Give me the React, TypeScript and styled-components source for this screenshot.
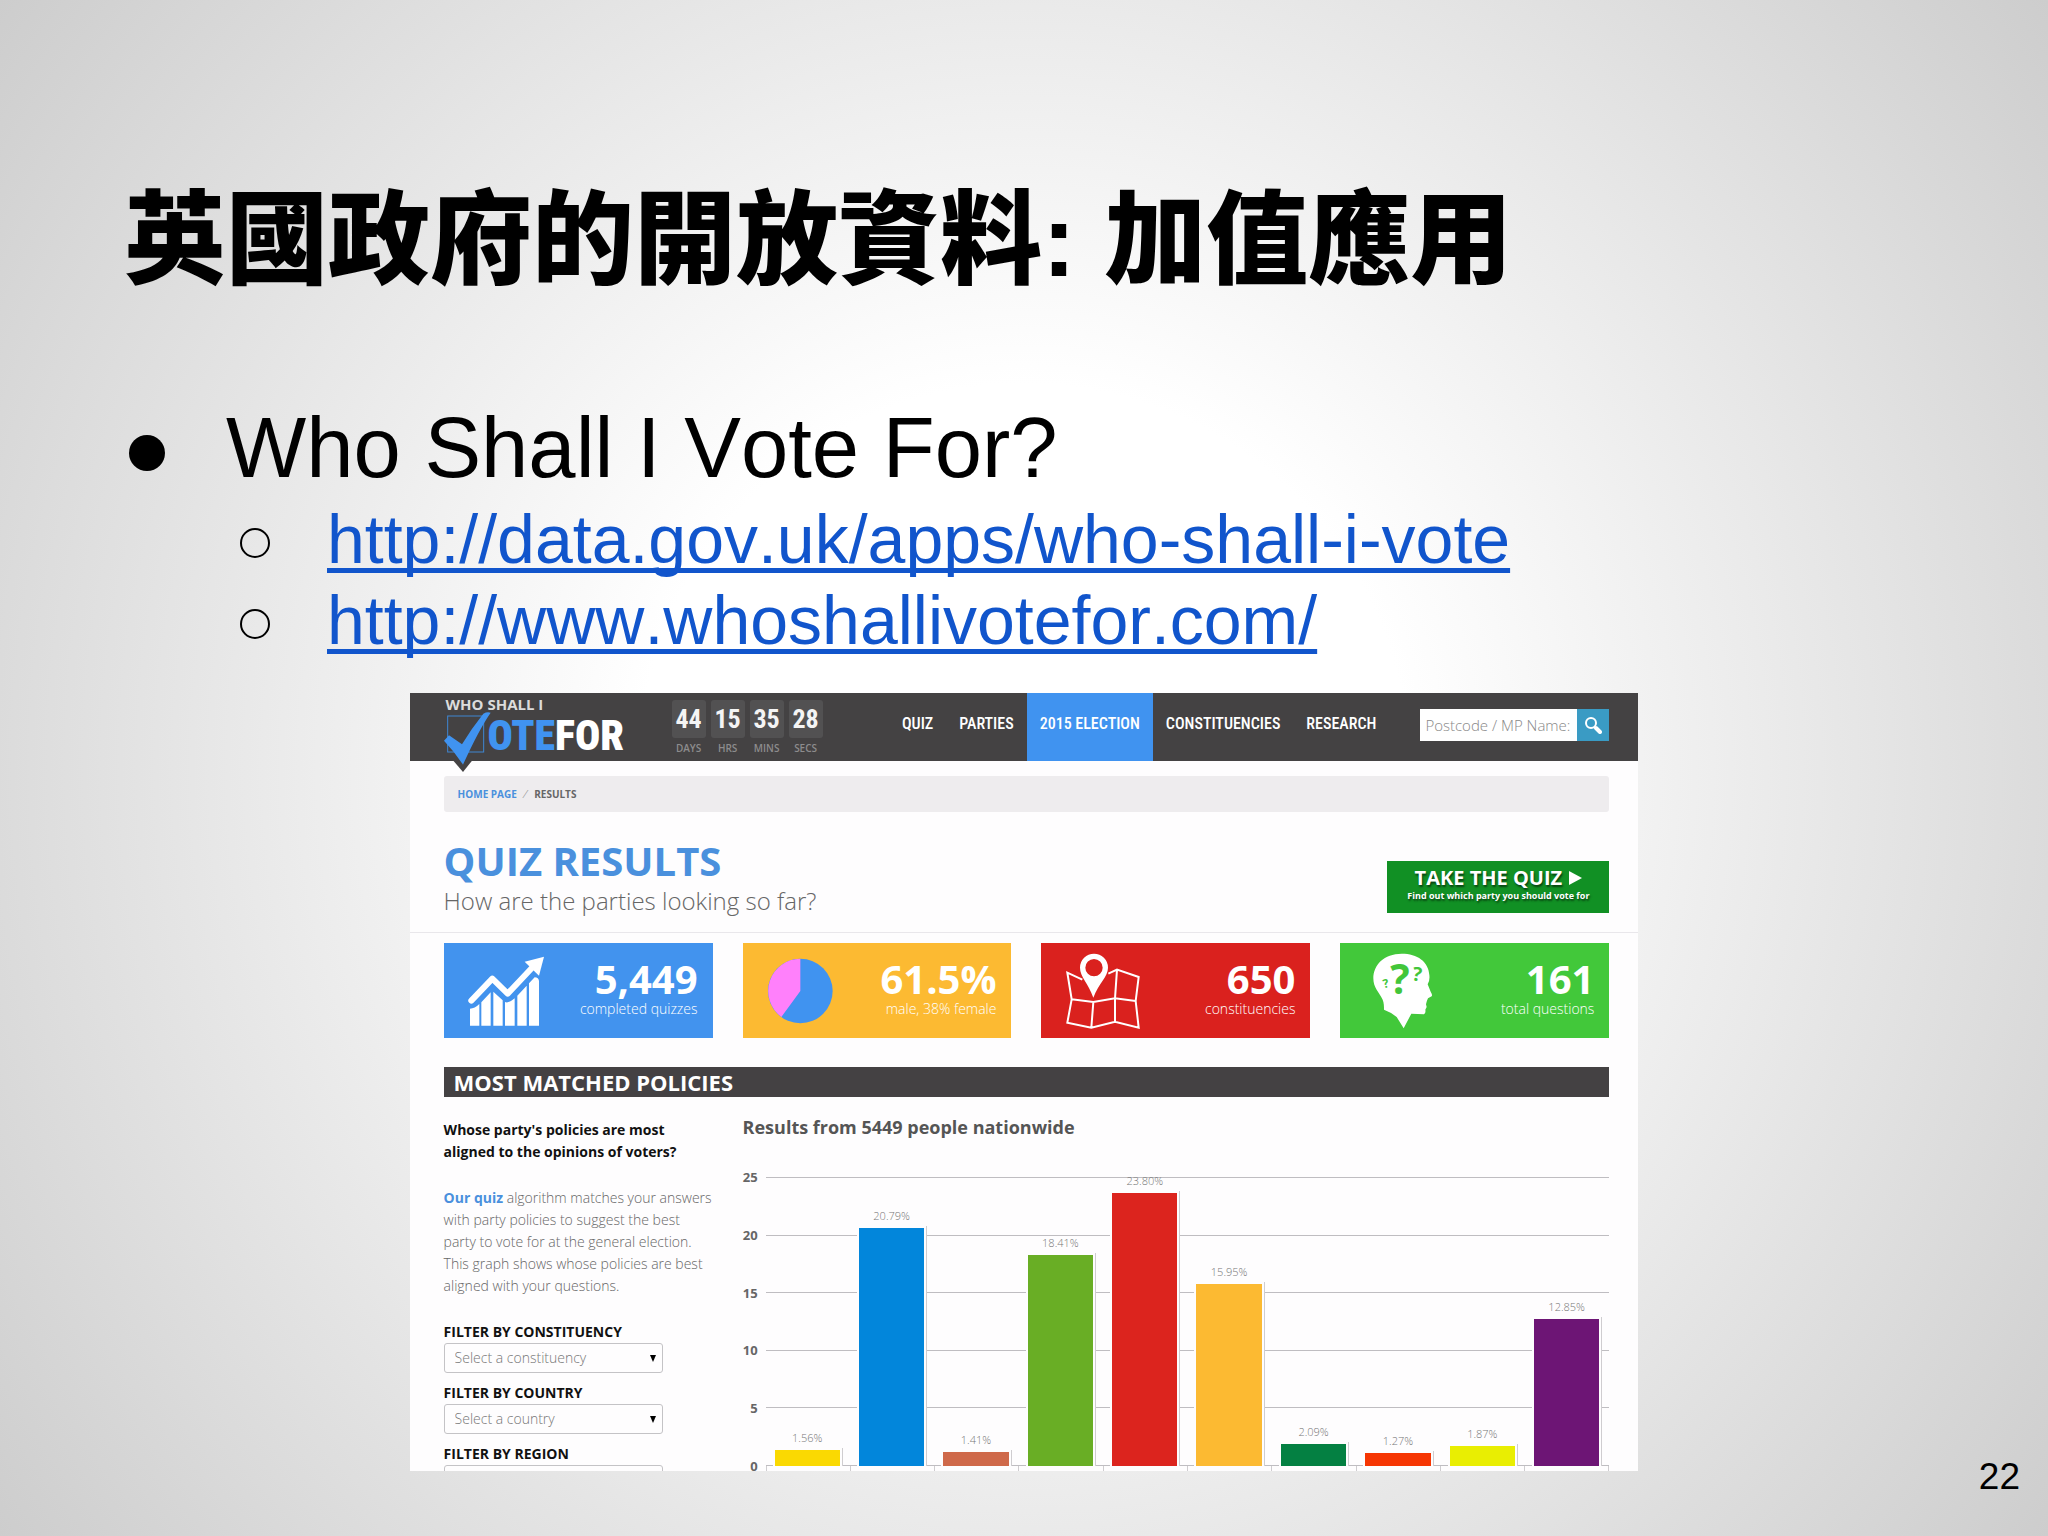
import React from 'react';
import styled, { createGlobalStyle } from 'styled-components';

const ARIAL = '"Liberation Sans", "Noto Sans CJK TC", sans-serif';
const OPEN = '"Open Sans", sans-serif';
const NARROW = '"Roboto Condensed", "Roboto", sans-serif';

const GlobalStyle = createGlobalStyle`
  *, *::before, *::after { box-sizing: border-box; }
  body { margin: 0; font-family: ${ARIAL}; color: #000; }
  h1, h2, h3, h4, p, ul { margin: 0; padding: 0; }
  ul { list-style: none; }
  button, input, select { font: inherit; border: 0; margin: 0; }
`;

/* ---------- slide ---------- */

const Slide = styled.main`
  display: flex;
  flex-direction: column;
  min-height: 100vh;
  overflow: hidden;
  background: radial-gradient(circle farthest-corner at 50% 50%, #fff 0%, #fff 30%, #cdcdcd 100%);
`;

const SlideTitle = styled.h1`
  padding: 181px 124px 0;
  font-size: 102px;
  font-weight: 900;
  line-height: 120px;
`;

const Points = styled.ul`
  padding: 98px 124px 0;
  font-kerning: none;
`;

const Point = styled.div`
  display: flex;
  font-size: 85px;
  line-height: 98px;

  &::before {
    content: '';
    flex: none;
    width: 36px;
    height: 36px;
    margin: 36px 61px 0 5px;
    border-radius: 50%;
    background: #000;
  }
`;

const SubPoints = styled.ul`
  padding: 2px 0 0 116px;
`;

const SubPoint = styled.li`
  display: flex;
  font-size: 68px;
  line-height: 81px;

  &::before {
    content: '';
    flex: none;
    width: 30px;
    height: 30px;
    margin: 29px 57px 0 0;
    border: 2px solid #000;
    border-radius: 50%;
  }
`;

const SlideLink = styled.a`
  color: #1155cc;
  text-decoration: underline;
  text-decoration-thickness: 5px;
  text-underline-offset: 5px;
  text-decoration-skip-ink: none;
`;

const Stage = styled.div`
  display: grid;
  grid-template-columns: 20% 60% 20%;
  flex: 1;
  margin-top: 32px;
`;

const PageNumber = styled.footer`
  grid-column: 3;
  align-self: end;
  padding: 0 28px 38px;
  font-size: 37px;
  line-height: 42px;
  text-align: right;
`;

/* ---------- embedded site ---------- */

const Site = styled.section`
  grid-column: 2;
  align-self: start;
  aspect-ratio: 1229 / 778;
  overflow: hidden;
  background: #fefdfe;
  font-family: ${OPEN};
`;

const SiteHeader = styled.header`
  position: relative;
  z-index: 1;
  display: flex;
  align-items: flex-start;
  height: 68px;
  padding: 0 29px 0 34px;
  background: #444243;
`;

const Logo = styled.a`
  flex: none;
  width: 228px;
  padding-top: 4px;
  text-decoration: none;
`;

const LogoTop = styled.span`
  display: block;
  padding-left: 2px;
  color: #dcdcdc;
  font-size: 15px;
  font-weight: 700;
  line-height: 15px;
`;

const LogoWord = styled.span`
  display: flex;
  align-items: flex-start;
  gap: 1px;
  color: #fff;
  font-family: ${NARROW};
  font-size: 42px;
  font-weight: 900;
  line-height: 48px;

  svg { flex: none; overflow: visible; }
  em { color: #4093f0; font-style: normal; }
`;

const Countdown = styled.div`
  display: flex;
  gap: 5px;
  padding-top: 7px;
`;

const Unit = styled.div`
  width: 34px;
  text-align: center;
`;

const UnitValue = styled.div`
  border-radius: 3px;
  background: #525152;
  color: #f4f4f4;
  font-family: ${NARROW};
  font-size: 26px;
  font-weight: 700;
  line-height: 38px;
`;

const UnitName = styled.div`
  padding-top: 3px;
  color: #8d8c8d;
  font-size: 10px;
  font-weight: 600;
  line-height: 14px;
`;

const Nav = styled.nav`
  display: flex;
  margin-left: auto;
`;

const NavLink = styled.a<{ $active?: boolean }>`
  padding: 0 13px 6px;
  background: ${(p) => (p.$active ? '#4093f0' : 'transparent')};
  color: #fff;
  font-family: ${NARROW};
  font-size: 16px;
  font-weight: 500;
  line-height: 62px;
  text-decoration: none;
  white-space: nowrap;
`;

const Search = styled.form`
  display: flex;
  width: 189px;
  height: 32px;
  margin: 16px 0 0 31px;
`;

const SearchInput = styled.input`
  flex: 1;
  min-width: 0;
  padding: 0 5px;
  border-radius: 0;
  background: #fff;
  font-size: 15px;
  font-weight: 300;

  &::placeholder { color: #888; opacity: 1; }
`;

const SearchButton = styled.button`
  display: grid;
  place-items: center;
  width: 32px;
  padding: 0;
  background: #3a9bc4;
`;

const SiteBody = styled.div`
  padding: 15px 29px 0 34px;
`;

const Crumbs = styled.nav`
  display: flex;
  gap: 8px;
  padding: 0 14px;
  border-radius: 3px;
  background: #eeecee;
  color: #666;
  font-size: 10px;
  font-weight: 700;
  line-height: 36px;

  a { color: #4a90dd; text-decoration: none; }
  i { color: #777; font-weight: 300; }
`;

const Intro = styled.div`
  display: flex;
  align-items: flex-start;
  justify-content: space-between;
  margin: 0 -29px 0 -34px;
  padding: 25px 29px 15px 34px;
  border-bottom: 1px solid #e9e7eb;
`;

const IntroTitle = styled.h2`
  color: #4a90dd;
  font-size: 40px;
  font-weight: 700;
  line-height: 48px;
`;

const IntroText = styled.p`
  color: #666;
  font-size: 24px;
  font-weight: 300;
  line-height: 32px;
`;

const QuizButton = styled.button`
  width: 222px;
  height: 52px;
  margin-top: 24px;
  padding: 0 0 6px;
  background: #119024;
  color: #fff;
  font-family: ${OPEN};
  font-weight: 700;
  text-shadow: 1px 2px 2px rgba(0, 0, 0, 0.55);
`;

const QuizButtonTitle = styled.span`
  display: flex;
  align-items: center;
  justify-content: center;
  gap: 6px;
  font-size: 20px;
  line-height: 24px;
`;

const QuizButtonNote = styled.span`
  display: block;
  font-size: 9px;
  line-height: 12px;
`;

const Cards = styled.div`
  display: grid;
  grid-template-columns: repeat(4, 1fr);
  gap: 30px;
  margin-top: 10px;
`;

const Card = styled.article<{ $color: string }>`
  display: flex;
  align-items: center;
  justify-content: space-between;
  height: 95px;
  padding: 0 15px 0 24px;
  background: ${(p) => p.$color};
  color: #fff;
  text-align: right;
`;

const CardBody = styled.div`
  padding-bottom: 6px;
`;

const CardValue = styled.div`
  font-size: 40px;
  font-weight: 700;
  line-height: 42px;
`;

const CardText = styled.div`
  font-size: 14px;
  font-weight: 300;
  line-height: 18px;
`;

const SectionBar = styled.h3`
  margin-top: 29px;
  padding: 0 10px;
  background: #444143;
  color: #fff;
  font-size: 22px;
  font-weight: 700;
  line-height: 30px;
`;

const Columns = styled.div`
  display: grid;
  grid-template-columns: 269px 1fr;
  gap: 30px;
`;

const Side = styled.div`
  display: flex;
  flex-direction: column;
  gap: 24px;
  padding-top: 22px;
  color: #666;
  font-size: 14px;
  font-weight: 300;
  line-height: 22px;
`;

const Question = styled.p`
  width: 240px;
  color: #111;
  font-weight: 700;
`;

const Strong = styled.a`
  color: #4a90dd;
  font-weight: 700;
  text-decoration: none;
`;

const Filters = styled.form`
  display: flex;
  flex-direction: column;
  gap: 9px;
`;

const Field = styled.div`
  display: grid;
  width: 219px;
`;

const FieldLabel = styled.label`
  color: #111;
  font-weight: 700;
`;

const FieldSelect = styled.select`
  grid-area: 2 / 1;
  height: 30px;
  padding: 0 10px;
  border: 1px solid #c4c3c6;
  border-radius: 3px;
  background: #fefdfe;
  color: #777;
  appearance: none;
`;

const FieldArrow = styled.svg`
  grid-area: 2 / 1;
  align-self: center;
  justify-self: end;
  margin-right: 7px;
  pointer-events: none;
`;

const Chart = styled.figure`
  margin: 0;
  padding-top: 18px;
`;

const ChartTitle = styled.figcaption`
  margin-bottom: 38px;
  color: #555;
  font-size: 18px;
  font-weight: 700;
  line-height: 24px;
`;

const Plot = styled.div`
  display: grid;
  grid-template: 289px 40px / 15px 1fr;
  column-gap: 8px;
`;

const Axis = styled.div`
  display: flex;
  flex-direction: column;
  justify-content: space-between;
  margin: -9px 0;
  color: #666;
  font-size: 13px;
  font-weight: 700;
  line-height: 18px;
  text-align: right;
`;

const Lines = styled.div`
  grid-area: 1 / 2;
  display: flex;
  flex-direction: column;
  justify-content: space-between;
`;

const Line = styled.div`
  height: 1px;
  background: #bfbdc1;
`;

const Bars = styled.div`
  grid-area: 1 / 2;
  display: grid;
  grid-template-columns: repeat(10, 1fr);
`;

const Slot = styled.div`
  display: flex;
  flex-direction: column;
  justify-content: flex-end;
  min-height: 0;
  padding: 0 8px 0 7px;
`;

const BarLabel = styled.div`
  padding-bottom: 2px;
  color: #777;
  font-size: 11px;
  font-weight: 300;
  line-height: 16px;
  text-align: center;
`;

const Bar = styled.div<{ $color: string }>`
  flex: none;
  border: 2px solid #fefdfe;
  border-bottom: 0;
  background: ${(p) => p.$color};
  box-shadow: 1px 0 0 #cfcdd0;
`;

const Ticks = styled.div`
  grid-area: 2 / 2;
  display: grid;
  grid-template-columns: repeat(10, 1fr);
  border-right: 1px solid #cfcdd0;
`;

const Tick = styled.div`
  border-left: 1px solid #cfcdd0;
`;

/* ---------- drawings ---------- */

const LogoCheck = () => (
  <svg width="43" height="60" viewBox="0 0 129 180" aria-hidden="true">
    <path d="M28 146H84L57 180Z" fill="#444243" />
    <rect x="11" y="12" width="108" height="108" fill="none" stroke="#3f86d2" strokeWidth="3" />
    <path d="M0 86 15 70 54 97Q82 50 118 5Q130 -2 140 2Q104 54 57 158Q34 122 0 86Z" fill="#4093f0" />
  </svg>
);

const GrowthIcon = () => (
  <svg width="76" height="76" viewBox="0 0 228 228" fill="#fff" aria-hidden="true">
    <path d="M6 218V167Q20 167 34 153V218ZM40 218V148L68 118V218ZM76 218V116L104 142V218ZM111 218V147Q122 152 140 136V218ZM148 218V128L176 98V218ZM183 218V91L200 73Q212 74 213 84V218Z" />
    <path d="M10 143 73 77 119 122 200 36" fill="none" stroke="#fff" strokeWidth="18" strokeLinecap="round" strokeLinejoin="round" />
    <path d="M228 11 170 26 213 68Z" />
  </svg>
);

const PieIcon = () => (
  <svg width="76" height="76" viewBox="0 0 228 228" aria-hidden="true">
    <circle cx="100" cy="114" r="97" fill="#4093f0" />
    <path d="M100 114V17A97 97 0 0 0 43 192Z" fill="#ff80fb" />
  </svg>
);

const MapIcon = () => (
  <svg width="76" height="76" viewBox="0 0 228 228" fill="none" stroke="#fff" strokeWidth="6" aria-hidden="true">
    <path d="M52 80 7 59 20 139 7 209 79 224 150 206 221 224 212 144 221 72 156 50 130 62M156 50 150 136V206M20 139 85 147 150 136 212 144M85 147 79 224" />
    <path d="M87 2A42 42 0 0 0 45 44C45 72 70 90 85 134C101 90 129 72 129 44A42 42 0 0 0 87 2ZM87 18A26 26 0 1 1 87 70A26 26 0 1 1 87 18Z" fill="#fff" fillRule="evenodd" stroke="none" />
  </svg>
);

const HeadMark = styled.text`
  fill: #42c63a;
  font-family: ${OPEN};
  font-weight: 700;
  text-anchor: middle;
`;

const HeadIcon = () => (
  <svg width="76" height="76" viewBox="0 0 228 228" aria-hidden="true">
    <path
      d="M113 2C60 2 28 36 28 76C28 104 44 116 56 140C60 150 60 160 60 170Q78 176 98 192L119 226L142 182L180 184Q186 180 184 170L188 162L186 154Q188 144 192 136L203 130Q206 126 200 116L191 94Q198 84 196 66C194 26 160 2 113 2Z"
      fill="#fff"
    />
    <HeadMark x="108" y="122" fontSize="122">?</HeadMark>
    <HeadMark x="157" y="84" fontSize="58" transform="rotate(8 157 84)">?</HeadMark>
    <HeadMark x="68" y="104" fontSize="36" transform="rotate(-14 68 104)">?</HeadMark>
  </svg>
);

const SearchIcon = () => (
  <svg width="18" height="18" viewBox="0 0 18 18" fill="none" stroke="#fff" aria-hidden="true">
    <circle cx="7" cy="7" r="5" strokeWidth="2" />
    <path d="M12 12 16 16" strokeWidth="4" strokeLinecap="round" />
  </svg>
);

/* ---------- data ---------- */

const countdown = [['44', 'DAYS'], ['15', 'HRS'], ['35', 'MINS'], ['28', 'SECS']];
const navItems = ['QUIZ', 'PARTIES', '2015 ELECTION', 'CONSTITUENCIES', 'RESEARCH'];

const cards = [
  { color: '#4293ee', Icon: GrowthIcon, value: '5,449', text: 'completed quizzes' },
  { color: '#fcba32', Icon: PieIcon, value: '61.5%', text: 'male, 38% female' },
  { color: '#da211e', Icon: MapIcon, value: '650', text: 'constituencies' },
  { color: '#42c83a', Icon: HeadIcon, value: '161', text: 'total questions' },
];

const filters = [
  { id: 'constituency', label: 'FILTER BY CONSTITUENCY', option: 'Select a constituency' },
  { id: 'country', label: 'FILTER BY COUNTRY', option: 'Select a country' },
  { id: 'region', label: 'FILTER BY REGION', option: '' },
];

const scaleMax = 25;
const scale = [25, 20, 15, 10, 5, 0];

const results = [
  { value: 1.56, color: '#fad902' },
  { value: 20.79, color: '#0286db' },
  { value: 1.41, color: '#cf694a' },
  { value: 18.41, color: '#69ae25' },
  { value: 23.8, color: '#dc241e' },
  { value: 15.95, color: '#fcba32' },
  { value: 2.09, color: '#048042' },
  { value: 1.27, color: '#f63603' },
  { value: 1.87, color: '#e9ee02' },
  { value: 12.85, color: '#6d1575' },
];

export default function App() {
  return (
    <Slide>
      <GlobalStyle />
      <SlideTitle lang="zh-Hant">英國政府的開放資料: 加值應用</SlideTitle>
      <Points>
        <li>
          <Point>Who Shall I Vote For?</Point>
          <SubPoints>
            <SubPoint>
              <SlideLink href="http://data.gov.uk/apps/who-shall-i-vote">http://data.gov.uk/apps/who-shall-i-vote</SlideLink>
            </SubPoint>
            <SubPoint>
              <SlideLink href="http://www.whoshallivotefor.com/">http://www.whoshallivotefor.com/</SlideLink>
            </SubPoint>
          </SubPoints>
        </li>
      </Points>

      <Stage>
        <Site>
          <SiteHeader>
            <Logo href="#home">
              <LogoTop>WHO SHALL I</LogoTop>
              <LogoWord>
                <LogoCheck />
                <span><em>OTE</em>FOR</span>
              </LogoWord>
            </Logo>
            <Countdown>
              {countdown.map(([value, name]) => (
                <Unit key={name}>
                  <UnitValue>{value}</UnitValue>
                  <UnitName>{name}</UnitName>
                </Unit>
              ))}
            </Countdown>
            <Nav>
              {navItems.map((item) => (
                <NavLink key={item} href="#nav" $active={item === '2015 ELECTION'}>{item}</NavLink>
              ))}
            </Nav>
            <Search onSubmit={(e) => e.preventDefault()}>
              <SearchInput type="text" aria-label="Postcode / MP Name" placeholder="Postcode / MP Name:" />
              <SearchButton type="submit" aria-label="Search"><SearchIcon /></SearchButton>
            </Search>
          </SiteHeader>

          <SiteBody>
            <Crumbs>
              <a href="#home">HOME PAGE</a>
              <i>⁄</i>
              <span>RESULTS</span>
            </Crumbs>

            <Intro>
              <div>
                <IntroTitle>QUIZ RESULTS</IntroTitle>
                <IntroText>How are the parties looking so far?</IntroText>
              </div>
              <QuizButton type="button">
                <QuizButtonTitle>
                  TAKE THE QUIZ
                  <svg width="14" height="14" viewBox="0 0 14 14" aria-hidden="true"><path d="M1 0 14 7 1 14Z" fill="#fff" /></svg>
                </QuizButtonTitle>
                <QuizButtonNote>Find out which party you should vote for</QuizButtonNote>
              </QuizButton>
            </Intro>

            <Cards>
              {cards.map(({ color, Icon, value, text }) => (
                <Card key={text} $color={color}>
                  <Icon />
                  <CardBody>
                    <CardValue>{value}</CardValue>
                    <CardText>{text}</CardText>
                  </CardBody>
                </Card>
              ))}
            </Cards>

            <SectionBar>MOST MATCHED POLICIES</SectionBar>

            <Columns>
              <Side>
                <Question>Whose party's policies are most aligned to the opinions of voters?</Question>
                <p>
                  <Strong href="#quiz">Our quiz</Strong> algorithm matches your answers<br />
                  with party policies to suggest the best<br />
                  party to vote for at the general election.<br />
                  This graph shows whose policies are best<br />
                  aligned with your questions.
                </p>
                <Filters>
                  {filters.map(({ id, label, option }) => (
                    <Field key={id}>
                      <FieldLabel htmlFor={id}>{label}</FieldLabel>
                      <FieldSelect id={id}><option>{option}</option></FieldSelect>
                      <FieldArrow width="6" height="7" viewBox="0 0 6 7" aria-hidden="true"><path d="M0 0H6L3 7Z" /></FieldArrow>
                    </Field>
                  ))}
                </Filters>
              </Side>

              <Chart>
                <ChartTitle>Results from 5449 people nationwide</ChartTitle>
                <Plot>
                  <Axis>{scale.map((n) => <span key={n}>{n}</span>)}</Axis>
                  <Lines>{scale.map((n) => <Line key={n} />)}</Lines>
                  <Bars>
                    {results.map(({ value, color }) => (
                      <Slot key={color}>
                        <BarLabel>{value.toFixed(2)}%</BarLabel>
                        <Bar $color={color} style={{ height: `${(value / scaleMax) * 100}%` }} />
                      </Slot>
                    ))}
                  </Bars>
                  <Ticks>{results.map(({ color }) => <Tick key={color} />)}</Ticks>
                </Plot>
              </Chart>
            </Columns>
          </SiteBody>
        </Site>
        <PageNumber>22</PageNumber>
      </Stage>
    </Slide>
  );
}
